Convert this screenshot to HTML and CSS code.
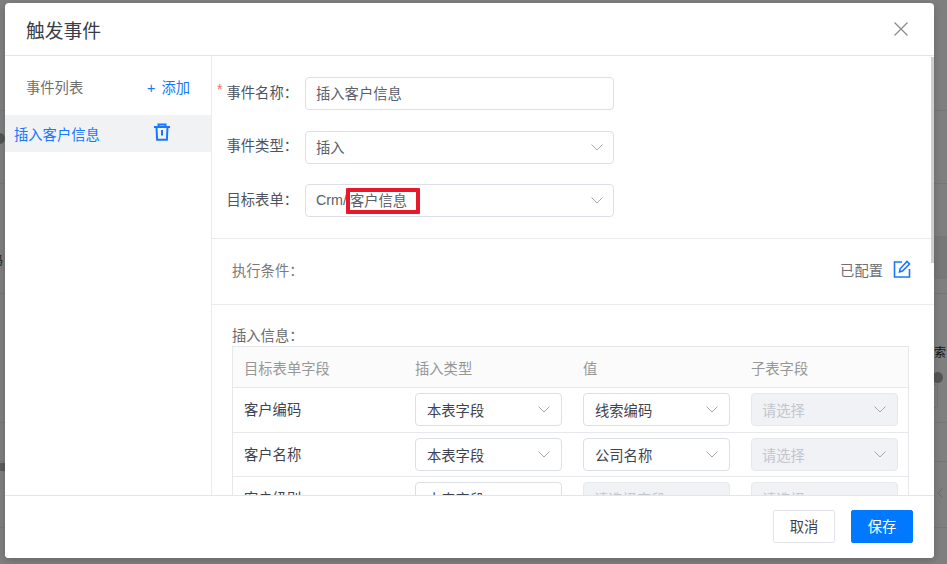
FILE: index.html
```html
<!DOCTYPE html>
<html lang="zh-Hans">
<head>
  <meta charset="UTF-8">
  <title>触发事件</title>
  <link rel="stylesheet" href="styles.css">
</head>
<body>
  <div class="backdrop">
    <span class="bg-line bg-line-1"></span>
    <span class="bg-line bg-line-2"></span>
    <span class="bg-line bg-line-3"></span>
    <span class="bg-line bg-line-4"></span>
    <span class="bg-line bg-line-5"></span>
    <span class="bg-line bg-line-6"></span>
    <span class="bg-band"></span>
    <span class="bg-band-left"></span>
    <span class="bg-text">索</span>
    <span class="bg-text-left">码</span>
    <span class="bg-dot bg-dot-left"></span>
    <span class="bg-dot bg-dot-right"></span>
    <span class="bg-box"></span>
    <svg class="bg-arrow" width="6" height="10" viewBox="0 0 6 10"><path d="M5.500.5L1 5l4.500 4.500" fill="none" stroke="#6a6a6a"/></svg>
  </div>
  <div class="dialog">
    <div class="dialog-header">
      <span class="dialog-title">触发事件</span>
      <svg class="close-icon" width="16" height="16" viewBox="0 0 16 16"><path d="M1.500 1.500l13 13M14.500 1.500l-13 13" fill="none" stroke="#8c8c8c" stroke-width="1.300"/></svg>
    </div>
    <div class="dialog-body">
      <div class="side">
        <div class="side-head">
          <span class="side-title">事件列表</span>
          <span class="side-add"><i>+</i>添加</span>
        </div>
        <div class="side-item">
          <span>插入客户信息</span>
          <svg class="trash-icon" width="18" height="18" viewBox="0 0 18 18"><path d="M1 4h16M5.500 4V1.500h7V4M3.500 4l.6 12.800h9.800L14.500 4M9 7v5.500" fill="none" stroke="#1677ff" stroke-width="2"/></svg>
        </div>
      </div>
      <div class="main">
        <div class="form">
          <div class="form-row">
            <label class="form-label required">事件名称：</label>
            <div class="input">插入客户信息</div>
          </div>
          <div class="form-row">
            <label class="form-label">事件类型：</label>
            <div class="input">插入<svg class="caret" width="12" height="7" viewBox="0 0 12 7"><path d="M.5.500L6 6l5.500-5.500" fill="none" stroke="#a3a8b3"/></svg></div>
          </div>
          <div class="form-row">
            <label class="form-label">目标表单：</label>
            <div class="input">Crm/<span class="form-name">客户信息</span><span class="mark"></span><svg class="caret" width="12" height="7" viewBox="0 0 12 7"><path d="M.5.500L6 6l5.500-5.500" fill="none" stroke="#a3a8b3"/></svg></div>
          </div>
        </div>
        <div class="cond">
          <span class="cond-label">执行条件：</span>
          <span class="cond-state">已配置</span>
          <svg width="18" height="18" viewBox="0 0 18 18"><path d="M9 2H1.500v15h15V9" fill="none" stroke="#1677ff" stroke-width="1.600"/><path d="M6.500 11.800l.6-3L14 1.500l2.500 2.500-7 7z" fill="none" stroke="#1677ff" stroke-width="1.600"/></svg>
        </div>
        <div class="insert">
          <div class="insert-title">插入信息：</div>
          <div class="table">
            <div class="tr th">
              <div>目标表单字段</div><div>插入类型</div><div>值</div><div>子表字段</div>
            </div>
            <div class="tr">
              <div class="cell-name">客户编码</div>
              <div><div class="select">本表字段<svg class="caret" width="12" height="7" viewBox="0 0 12 7"><path d="M.5.500L6 6l5.500-5.500" fill="none" stroke="#a3a8b3"/></svg></div></div>
              <div><div class="select">线索编码<svg class="caret" width="12" height="7" viewBox="0 0 12 7"><path d="M.5.500L6 6l5.500-5.500" fill="none" stroke="#a3a8b3"/></svg></div></div>
              <div><div class="select disabled">请选择<svg class="caret" width="12" height="7" viewBox="0 0 12 7"><path d="M.5.500L6 6l5.500-5.500" fill="none" stroke="#a3a8b3"/></svg></div></div>
            </div>
            <div class="tr">
              <div class="cell-name">客户名称</div>
              <div><div class="select">本表字段<svg class="caret" width="12" height="7" viewBox="0 0 12 7"><path d="M.5.500L6 6l5.500-5.500" fill="none" stroke="#a3a8b3"/></svg></div></div>
              <div><div class="select">公司名称<svg class="caret" width="12" height="7" viewBox="0 0 12 7"><path d="M.5.500L6 6l5.500-5.500" fill="none" stroke="#a3a8b3"/></svg></div></div>
              <div><div class="select disabled">请选择<svg class="caret" width="12" height="7" viewBox="0 0 12 7"><path d="M.5.500L6 6l5.500-5.500" fill="none" stroke="#a3a8b3"/></svg></div></div>
            </div>
            <div class="tr">
              <div class="cell-name">客户级别</div>
              <div><div class="select">本表字段</div></div>
              <div><div class="select disabled">请选择字段</div></div>
              <div><div class="select disabled">请选择</div></div>
            </div>
          </div>
        </div>
        <span class="scroll-thumb"></span>
      </div>
    </div>
    <div class="dialog-footer">
      <button class="btn">取消</button>
      <button class="btn btn-primary">保存</button>
    </div>
  </div>
</body>
</html>
```

FILE: styles.css
```css
html, body {
  margin: 0;
  height: 100%;
  overflow: hidden;
}
body {
  font-family: "Liberation Sans", "Noto Sans CJK SC", sans-serif;
  font-size: 14.3px;
  color: #4e5362;
  background: #7f7f7f;
  position: relative;
}
.backdrop {
  position: absolute;
  inset: 0;
}
.bg-line {
  position: absolute;
  height: 1px;
  left: 0;
  right: 0;
  background: #767676;
}
.bg-line-1 { top: 110px; }
.bg-line-2 { top: 183px; }
.bg-line-3 { top: 293px; }
.bg-line-4 { top: 422px; }
.bg-line-5 { top: 461px; }
.bg-line-6 { top: 527px; }
.bg-band {
  position: absolute;
  left: 934px;
  right: 0;
  top: 236px;
  height: 43px;
  background: #787878;
}
.bg-band-left {
  position: absolute;
  left: 0;
  width: 5px;
  top: 463px;
  height: 8px;
  background: #5c5c5c;
}
.bg-text {
  position: absolute;
  left: 934px;
  top: 343px;
  font-size: 12px;
  color: #111;
}
.bg-text-left {
  position: absolute;
  left: -9px;
  top: 251px;
  font-size: 12px;
  color: #222;
}
.bg-dot {
  position: absolute;
  width: 11px;
  height: 11px;
  border-radius: 50%;
  background: #555;
}
.bg-dot-left { left: -6px; top: 133px; }
.bg-dot-right { left: 932px; top: 372px; }
.bg-box {
  position: absolute;
  left: 930px;
  top: 384px;
  width: 6px;
  height: 22px;
  border: 1px solid #747474;
  border-radius: 2px;
}
.bg-arrow {
  position: absolute;
  left: 937px;
  top: 488px;
}

.dialog {
  position: absolute;
  left: 5px;
  top: 3px;
  width: 929px;
  height: 555px;
  background: #fff;
  border-radius: 4px;
  display: flex;
  flex-direction: column;
  box-shadow: 0 2px 8px rgba(0,0,0,0.2);
}
.dialog-header {
  height: 52px;
  flex: none;
  display: flex;
  align-items: center;
  justify-content: space-between;
  padding: 0 25px 0 21px;
  border-bottom: 1px solid #e5e5e5;
}
.dialog-title {
  font-size: 18.800px;
  color: #3a3d47;
}
.close-icon {
  display: block;
}
.dialog-body {
  flex: 1;
  min-height: 0;
  display: flex;
  overflow: hidden;
}
.side {
  width: 206px;
  flex: none;
  border-right: 1px solid #ebebeb;
}
.side-head {
  height: 59px;
  display: flex;
  align-items: center;
  justify-content: space-between;
  padding: 1px 21px 0 21px;
  box-sizing: border-box;
}
.side-title {
  color: #6f6f6f;
}
.side-add {
  color: #1677ff;
}
.side-add i {
  font-style: normal;
  margin-right: 6px;
}
.side-item {
  height: 37px;
  background: #f1f2f4;
  display: flex;
  align-items: center;
  justify-content: space-between;
  padding: 0 40px 0 9px;
  color: #1677ff;
}
.trash-icon {
  margin-top: -3px;
}

.main {
  flex: 1;
  min-width: 0;
  position: relative;
}
.form {
  padding: 21px 20px 21px 0;
  border-bottom: 1px solid #ebebeb;
}
.form-row {
  display: flex;
  align-items: center;
  height: 33px;
  margin-bottom: 20.500px;
}
.form-row:last-child {
  margin-bottom: 0;
}
.form-label {
  width: 93px;
  flex: none;
  box-sizing: border-box;
  padding: 0 7px 5px 0;
  text-align: right;
  white-space: nowrap;
  color: #4e5362;
  position: relative;
}
.required::before {
  content: "*";
  color: #f56c6c;
  position: absolute;
  left: 5px;
  top: 0;
}
.input {
  width: 309px;
  height: 33px;
  box-sizing: border-box;
  border: 1px solid #dcdfe6;
  border-radius: 4px;
  padding: 0 10px 2px;
  display: flex;
  align-items: center;
  justify-content: flex-start;
  color: #5a5f6b;
  position: relative;
}
.input .caret {
  margin-left: auto;
  margin-top: 2px;
}
.form-name {
  margin-left: 3px;
}
.mark {
  position: absolute;
  left: 40px;
  top: 3px;
  width: 74px;
  height: 26px;
  box-sizing: border-box;
  border: 4px solid #e8182c;
  border-radius: 1px;
}
.cond {
  height: 66px;
  box-sizing: border-box;
  display: flex;
  align-items: center;
  padding: 0 23px 5px 20px;
  border-bottom: 1px solid #ebebeb;
  color: #7a7a7a;
}
.cond-state {
  margin-left: auto;
  margin-right: 10px;
  color: #6f6f6f;
}
.insert {
  padding: 21px 25px 0 20px;
}
.insert-title {
  line-height: 20px;
  color: #6a6a6a;
}
.table {
  border: 1px solid #e6e8ec;
  border-bottom: none;
}
.tr {
  display: grid;
  grid-template-columns: 171px 168px 168px 1fr;
  align-items: center;
  height: 44.500px;
  box-sizing: border-box;
  border-bottom: 1px solid #e6e8ec;
  padding-left: 11px;
  color: #3f4350;
}
.th {
  height: 41px;
  background: #fbfbfb;
  color: #979797;
}
.cell-name {
  padding-bottom: 2px;
}
.select {
  width: 147px;
  height: 33px;
  box-sizing: border-box;
  border: 1px solid #dcdfe6;
  border-radius: 4px;
  padding: 0 11px;
  display: flex;
  align-items: center;
  justify-content: space-between;
  background: #fff;
  color: #3f4350;
}
.select.disabled {
  background: #f1f2f5;
  border-color: #e6e8ec;
  color: #c3c6ce;
  padding-left: 10px;
}
.scroll-thumb {
  position: absolute;
  right: 0;
  top: 1px;
  width: 3px;
  height: 206px;
  background: #cfcfcf;
}

.dialog-footer {
  height: 63px;
  flex: none;
  box-sizing: border-box;
  border-top: 1px solid #e5e5e5;
  background: #fff;
  display: flex;
  align-items: center;
  justify-content: flex-end;
  gap: 16px;
  padding: 0 21px 1px 0;
  border-radius: 0 0 4px 4px;
}
.btn {
  width: 62px;
  height: 33px;
  border: 1px solid #e2e4ea;
  border-radius: 2px;
  background: #fff;
  font: inherit;
  color: #3f4350;
  padding: 0 0 2px;
}
.btn-primary {
  background: #0079fe;
  border-color: #0079fe;
  color: #fff;
}
```
